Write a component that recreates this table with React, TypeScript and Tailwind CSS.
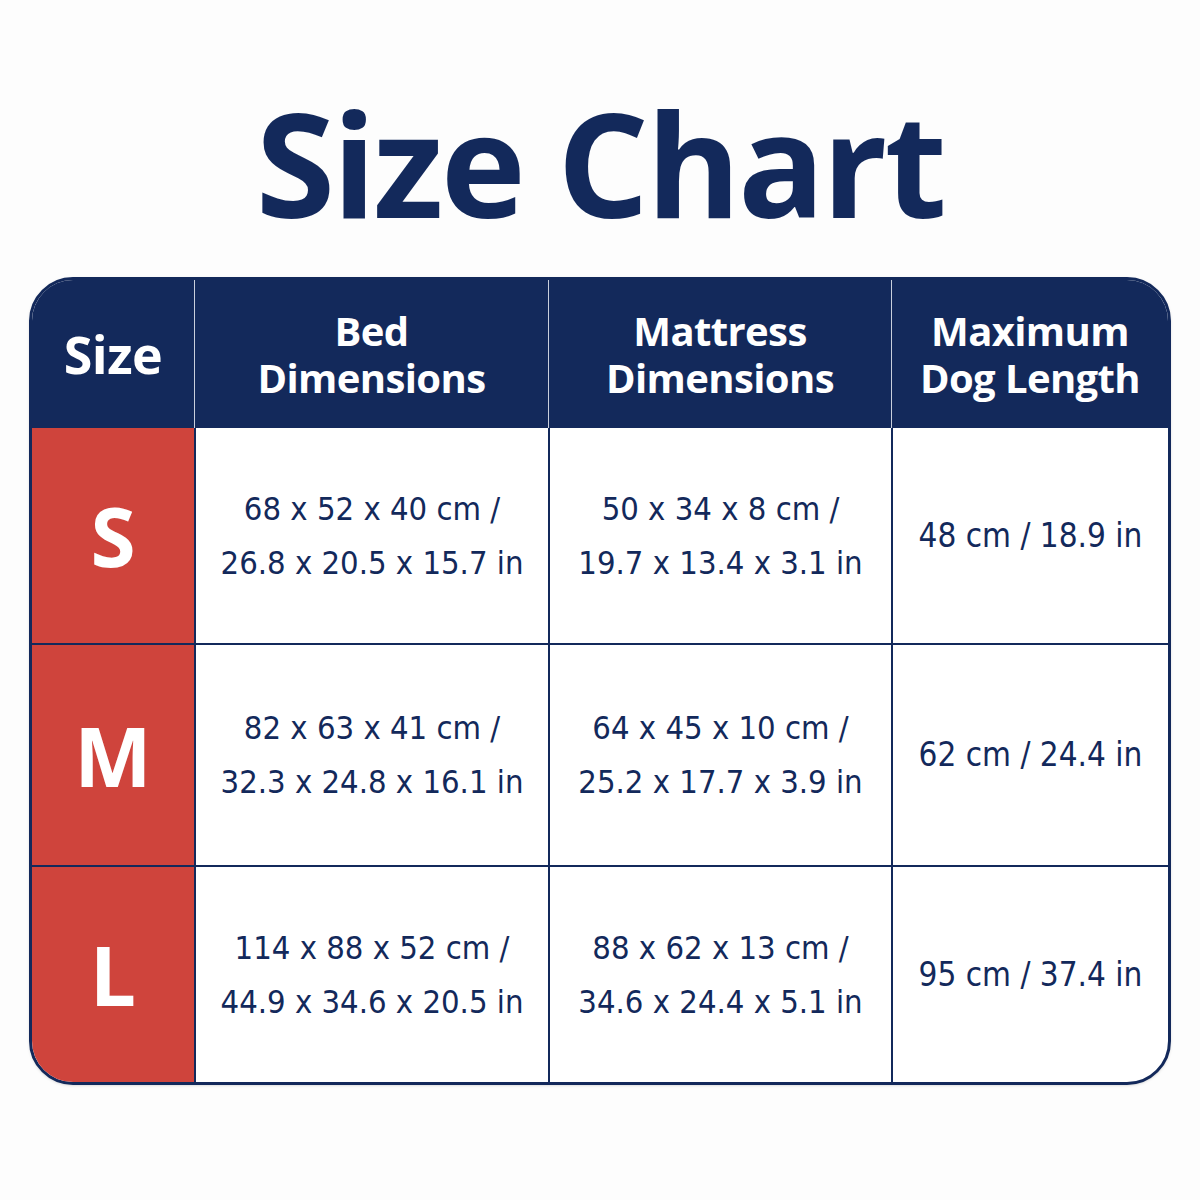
import React from 'react';

type Row = {
    size: string;
    bed: [string, string];
    mattress: [string, string];
    dog: string;
    h: string;
};

const rows: Row[] = [
    { size: 'S', bed: ['68 x 52 x 40 cm /', '26.8 x 20.5 x 15.7 in'], mattress: ['50 x 34 x 8 cm /', '19.7 x 13.4 x 3.1 in'], dog: '48 cm / 18.9 in', h: 'h-[215px]' },
    { size: 'M', bed: ['82 x 63 x 41 cm /', '32.3 x 24.8 x 16.1 in'], mattress: ['64 x 45 x 10 cm /', '25.2 x 17.7 x 3.9 in'], dog: '62 cm / 24.4 in', h: 'h-[222px]' },
    { size: 'L', bed: ['114 x 88 x 52 cm /', '44.9 x 34.6 x 20.5 in'], mattress: ['88 x 62 x 13 cm /', '34.6 x 24.4 x 5.1 in'], dog: '95 cm / 37.4 in', h: 'h-[217px]' },
];

const heading = "font-['Open_Sans',sans-serif] font-bold";
const body = "font-['Liberation_Sans_Narrow','DejaVu_Sans_Condensed',Roboto,sans-serif]";

const App: React.FC = () => {
    return (
        <div className="w-[1200px] h-[1200px] bg-[#fdfdfd] pt-[74px]">
            <h1 className={`${heading} text-center text-[144px] leading-[176px] tracking-[-0.02em] text-[#13295b]`}>
                Size Chart
            </h1>

            <div className="mx-auto mt-[27px] w-[1142px] rounded-[44px] border-[3px] border-[#13295b] overflow-hidden bg-white shadow-sm">
                {/* header */}
                <div className="grid grid-cols-[162px_354px_343px_1fr] h-[148px] bg-[#13295b] text-white">
                    <div className={`${heading} flex items-center justify-center text-[52px] tracking-[-0.01em]`}>Size</div>
                    {[['Bed', 'Dimensions'], ['Mattress', 'Dimensions'], ['Maximum', 'Dog Length']].map(([a, b]) => (
                        <div key={a} className="flex items-center justify-center border-l border-[#c9cfdc]">
                            <p className={`${heading} text-center text-[40px] leading-[47px] tracking-[-0.015em]`}>
                                {a}
                                <br />
                                {b}
                            </p>
                        </div>
                    ))}
                </div>

                {/* rows */}
                {rows.map((r, i) => (
                    <div key={r.size} className={`grid grid-cols-[162px_354px_343px_1fr] ${r.h} ${i > 0 ? 'border-t-2 border-[#13295b]' : ''}`}>
                        <div className={`${heading} flex items-center justify-center bg-[#cf443c] text-white text-[82px]`}>
                            {r.size}
                        </div>
                        <div className={`${body} flex flex-col items-center justify-center border-l-2 border-[#13295b] text-[32.5px] leading-[54px] text-[#13295b]`}>
                            <span>{r.bed[0]}</span>
                            <span>{r.bed[1]}</span>
                        </div>
                        <div className={`${body} flex flex-col items-center justify-center border-l-2 border-[#13295b] text-[32.5px] leading-[54px] text-[#13295b]`}>
                            <span>{r.mattress[0]}</span>
                            <span>{r.mattress[1]}</span>
                        </div>
                        <div className={`${body} flex items-center justify-center border-l-2 border-[#13295b] text-[33px] text-[#13295b]`}>
                            {r.dog}
                        </div>
                    </div>
                ))}
            </div>
        </div>
    );
};

export default App;
